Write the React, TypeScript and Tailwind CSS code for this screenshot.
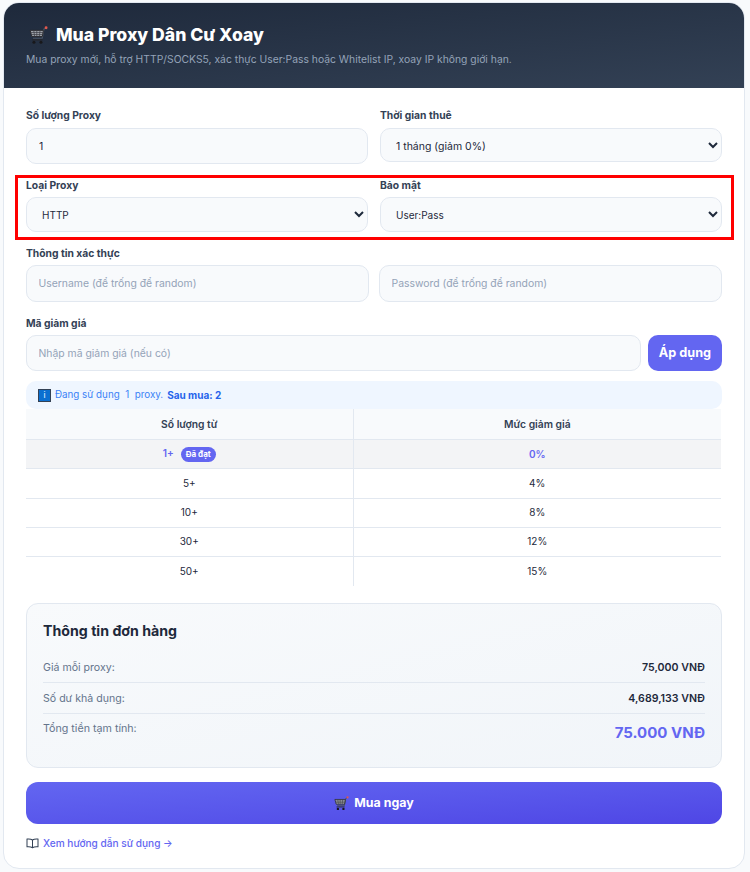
import React from "react";

function Cart({ className }: { className: string }) {
  return (
    <svg viewBox="0 0 20 20" className={className} aria-hidden="true">
      <path d="M18 2 15.7 3.2 13.9 12.9H4.2" fill="none" stroke="#4b5563" strokeWidth="1.3" />
      <path d="M1.2 4.6H15.2L14 11H3Z" fill="#a3a8af" stroke="#27272a" strokeWidth="1" />
      <path d="M2 6.8H14.8M2.5 8.9H14.4M5 4.8 5.9 10.8M8.2 4.8V10.8M11.6 4.8 10.9 10.8" stroke="#3f3f46" strokeWidth="0.8" fill="none" />
      <path d="M3.4 14.6H14.2" stroke="#27272a" strokeWidth="1.2" />
      <circle cx="5.2" cy="17.2" r="1.6" fill="#18181b" />
      <circle cx="12.6" cy="17.2" r="1.6" fill="#18181b" />
      <circle cx="18" cy="1.8" r="1.5" fill="#e2584d" />
    </svg>
  );
}

function Label({ children }: { children: React.ReactNode }) {
  return <label className="block text-[10.3px] leading-[15px] -mb-[2px] font-bold text-[#334155]">{children}</label>;
}

function Select({ value, options, className }: { value: string; options: string[]; className: string }) {
  return (
    <select
      defaultValue={value}
      className={`w-full border border-[#e2e8f0] bg-[#f8fafc] rounded-[10px] pl-[11px] pr-0 text-[#1e293b] ${className}`}
    >
      {options.map((o) => (
        <option key={o}>{o}</option>
      ))}
    </select>
  );
}

function Field({ placeholder, className }: { placeholder: string; className: string }) {
  return (
    <input
      placeholder={placeholder}
      className={`border border-[#e2e8f0] bg-[#f8fafc] rounded-[10px] pl-[11.5px] pr-3 text-[10.4px] text-[#1e293b] placeholder:text-[#94a3b8] ${className}`}
    />
  );
}

const tiers = [
  { from: "5+", pct: "4%", row: "h-[30px] border-b border-[#e2e8f0]" },
  { from: "10+", pct: "8%", row: "h-[29px] border-b border-[#e2e8f0]" },
  { from: "30+", pct: "12%", row: "h-[29px] border-b border-[#e2e8f0]" },
  { from: "50+", pct: "15%", row: "h-[30px]" },
];

function SummaryRow({ label, value }: { label: string; value: string }) {
  return (
    <div className="flex justify-between items-center h-[31px] pt-[2px] border-b border-[#e2e8f0] text-[10.6px]">
      <span className="text-[#64748b]">{label}</span>
      <span className="font-semibold text-[#1e293b]">{value}</span>
    </div>
  );
}

export default function App() {
  return (
    <div className="relative h-[872px] overflow-hidden bg-[#f8fafc] pt-[2px] pl-[3px] pr-[5px] font-['Inter',sans-serif]">
      <div className="rounded-[16px] border border-[#e2e8f0] bg-white overflow-hidden h-[867px]">
        <div className="h-[85px] bg-gradient-to-br from-[#1e293b] to-[#334155] pl-[25px] pr-[22px] pt-[19px]">
          <div className="flex items-center gap-[8px] h-[26px]">
            <Cart className="w-[19px] h-[19px]" />
            <h1 className="text-[17.6px] leading-[26px] font-extrabold text-white">Mua Proxy Dân Cư Xoay</h1>
          </div>
          <p className="mt-[4px] -ml-[3px] text-[10.35px] leading-[14px] text-[#94a3b8]">
            Mua proxy mới, hỗ trợ HTTP/SOCKS5, xác thực User:Pass hoặc Whitelist IP, xoay IP không giới hạn.
          </p>
        </div>

        <div className="px-[22px] pt-[20px]">
          <div className="grid grid-cols-2 gap-x-[12px]">
            <div>
              <Label>Số lượng Proxy</Label>
              <input
                defaultValue="1"
                className="mt-[7px] w-full h-[36px] border border-[#e2e8f0] bg-[#f8fafc] rounded-[10px] px-3 text-[10.5px] text-[#1e293b]"
              />
            </div>
            <div>
              <Label>Thời gian thuê</Label>
              <Select className="mt-[7px] h-[34px] pt-[2px] text-[10.5px]" value="1 tháng (giảm 0%)" options={["1 tháng (giảm 0%)"]} />
            </div>
          </div>

          <div className="grid grid-cols-2 gap-x-[12px] mt-[14px]">
            <div>
              <Label>Loại Proxy</Label>
              <Select className="mt-[6px] h-[35px] text-[10px]" value="HTTP" options={["HTTP", "SOCKS5"]} />
            </div>
            <div>
              <Label>Bảo mật</Label>
              <Select className="mt-[6px] h-[35px] text-[10px]" value="User:Pass" options={["User:Pass", "Whitelist IP"]} />
            </div>
          </div>

          <div className="mt-[14px]">
            <Label>Thông tin xác thực</Label>
            <div className="mt-[6px] flex gap-[10px]">
              <Field className="flex-1 min-w-0 h-[37px]" placeholder="Username (để trống để random)" />
              <Field className="flex-1 min-w-0 h-[37px]" placeholder="Password (để trống để random)" />
            </div>
          </div>

          <div className="mt-[14px]">
            <Label>Mã giảm giá</Label>
            <div className="mt-[6px] flex gap-[7px]">
              <Field className="flex-1 min-w-0 h-[36px]" placeholder="Nhập mã giảm giá (nếu có)" />
              <button className="w-[74px] h-[36px] rounded-[10px] bg-[#6366f1] text-white text-[12.7px] font-bold">Áp dụng</button>
            </div>
          </div>

          <div className="mt-[10px] h-[28px] rounded-[10px] bg-[#eff6ff] flex items-center pl-[12px] text-[9.8px] text-[#3b82f6]">
            <span className="w-[13px] h-[13px] mr-[4px] bg-[#0b6fd0] border border-[#334155] text-[#dbeafe] text-[8px] leading-[11px] text-center font-medium">i</span>
            <span>Đang sử dụng&nbsp; 1&nbsp; proxy.</span>
            <span className="ml-[4px] text-[10px] font-bold text-[#2563eb]">Sau mua: 2</span>
          </div>

          <table className="w-[695px] table-fixed border-collapse text-[10px] text-[#1e293b]">
            <thead>
              <tr className="bg-[#f8fafc] h-[30px] border-b border-[#e2e8f0] text-[10.3px]">
                <th className="w-[327px] pt-[2px] border-r border-[#e2e8f0] font-semibold text-[#334155]">Số lượng từ</th>
                <th className="pt-[2px] font-semibold text-[#334155]">Mức giảm giá</th>
              </tr>
            </thead>
            <tbody>
              <tr className="h-[29px] bg-[#f3f4f6] border-b border-[#e2e8f0] text-[#6366f1] font-semibold">
                <td className="pt-[1px] border-r border-[#e2e8f0] text-center">
                  1+
                  <span className="ml-[7px] inline-block rounded-full bg-[#6366f1] text-white text-[8px] leading-[15px] px-[5px] font-bold align-middle">Đã đạt</span>
                </td>
                <td className="pt-[1px] text-center">0%</td>
              </tr>
              {tiers.map((t) => (
                <tr key={t.from} className={t.row}>
                  <td className="border-r border-[#e2e8f0] text-center">{t.from}</td>
                  <td className="text-center">{t.pct}</td>
                </tr>
              ))}
            </tbody>
          </table>

          <div className="mt-[17px] h-[165px] rounded-[12px] border border-[#e2e8f0] bg-gradient-to-br from-[#f8fafc] to-[#f1f5f9] px-[16px] pt-[18px]">
            <h2 className="text-[14.2px] leading-[18px] font-bold text-[#1e293b]">Thông tin đơn hàng</h2>
            <div className="mt-[12px]">
              <SummaryRow label="Giá mỗi proxy:" value="75,000 VNĐ" />
              <SummaryRow label="Số dư khả dụng:" value="4,689,133 VNĐ" />
              <div className="flex justify-between pt-[7px] text-[10.7px]">
                <span className="text-[#64748b]">Tổng tiền tạm tính:</span>
                <span className="text-[15px] leading-[24px] font-bold text-[#6366f1]">75.000 VNĐ</span>
              </div>
            </div>
          </div>

          <button className="mt-[14px] w-full h-[42px] rounded-[12px] bg-gradient-to-br from-[#6366f1] to-[#4f46e5] text-white text-[12.4px] font-bold flex items-center justify-center gap-[5px]">
            <Cart className="w-[15px] h-[15px]" />
            Mua ngay
          </button>

          <div className="mt-[12px] flex items-center gap-[4px] text-[10.1px] font-medium text-[#6366f1]">
            <svg viewBox="0 0 14 12" className="w-[13px] h-[11px]" fill="none" stroke="#334155" strokeWidth="1.1">
              <path d="M7 2.2C5.6 1.2 3.4 1 1 1.2V9.6C3.4 9.4 5.6 9.6 7 10.6 8.4 9.6 10.6 9.4 13 9.6V1.2C10.6 1 8.4 1.2 7 2.2ZM7 2.2V10.6" />
            </svg>
            <a>Xem hướng dẫn sử dụng →</a>
          </div>
        </div>
      </div>
      <div className="absolute left-[15px] top-[175px] w-[719px] h-[65px] border-[3px] border-[#ff0000] pointer-events-none" />
    </div>
  );
}
